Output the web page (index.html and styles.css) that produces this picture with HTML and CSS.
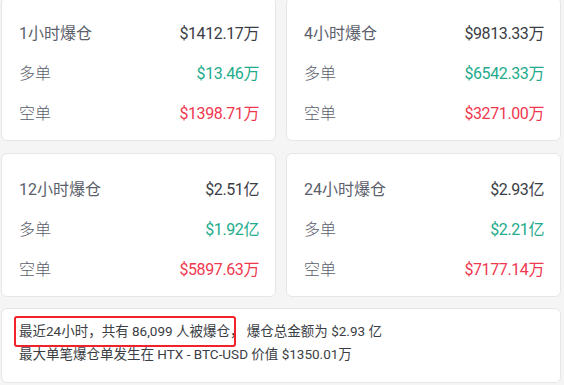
FILE: index.html
```html
<!DOCTYPE html>
<html lang="zh-CN">
<head>
<meta charset="utf-8">
<link rel="stylesheet" href="styles.css">
</head>
<body>
<div class="page">
  <div class="grid">
    <div class="card">
      <div class="row"><span class="label">1小时爆仓</span><span class="val">$1412.17万</span></div>
      <div class="row"><span class="label">多单</span><span class="val up">$13.46万</span></div>
      <div class="row"><span class="label">空单</span><span class="val down">$1398.71万</span></div>
    </div>
    <div class="card">
      <div class="row"><span class="label">4小时爆仓</span><span class="val">$9813.33万</span></div>
      <div class="row"><span class="label">多单</span><span class="val up">$6542.33万</span></div>
      <div class="row"><span class="label">空单</span><span class="val down">$3271.00万</span></div>
    </div>
    <div class="card">
      <div class="row"><span class="label">12小时爆仓</span><span class="val">$2.51亿</span></div>
      <div class="row"><span class="label">多单</span><span class="val up">$1.92亿</span></div>
      <div class="row"><span class="label">空单</span><span class="val down">$5897.63万</span></div>
    </div>
    <div class="card">
      <div class="row"><span class="label">24小时爆仓</span><span class="val">$2.93亿</span></div>
      <div class="row"><span class="label">多单</span><span class="val up">$2.21亿</span></div>
      <div class="row"><span class="label">空单</span><span class="val down">$7177.14万</span></div>
    </div>
  </div>
  <div class="summary">
    <p class="line"><span class="hl">最近24小时，共有 86,099 人被爆仓</span>， 爆仓总金额为 $2.93 亿</p>
    <p class="line">最大单笔爆仓单发生在 HTX - BTC-USD 价值 $1350.01万</p>
  </div>
</div>
</body>
</html>
```
FILE: styles.css
```css
html, body {
  margin: 0;
  padding: 0;
  background: #f5f5f6;
}
body {
  font-family: Roboto, "Noto Sans CJK SC", sans-serif;
  color: #333;
}
.page {
  width: 560px;
  padding-left: 1px;
  margin-top: -3px;
}
.grid {
  display: grid;
  grid-template-columns: 275px 275px;
  column-gap: 10px;
  row-gap: 12px;
}
.card {
  box-sizing: border-box;
  height: 144px;
  background: #fff;
  border: 1px solid #e6e6e8;
  border-radius: 6px;
  padding: 14px 16px 10px 17px;
}
.row {
  display: flex;
  justify-content: space-between;
  align-items: center;
  height: 40px;
  font-size: 16px;
}
.label {
  color: #5b606b;
  font-weight: 300;
}
.row:first-child .label {
  font-weight: 400;
}
.val {
  color: #3a3d44;
  letter-spacing: -0.4px;
  font-weight: 400;
}
.val.up { color: #22ab8c; }
.val.down { color: #f0384f; }
.summary {
  box-sizing: border-box;
  margin-top: 11px;
  height: 75px;
  background: #fff;
  border: 1px solid #e6e6e8;
  border-radius: 6px;
  padding: 11px 17px;
  font-size: 13.5px;
  color: #3b3e44;
}
.line {
  margin: 0;
  line-height: 23px;
}
.hl {
  position: relative;
}
.hl::after {
  content: "";
  position: absolute;
  left: -5px;
  right: -6px;
  top: -7px;
  bottom: -8px;
  border: 2px solid #f2212a;
  border-radius: 3px;
}
```
